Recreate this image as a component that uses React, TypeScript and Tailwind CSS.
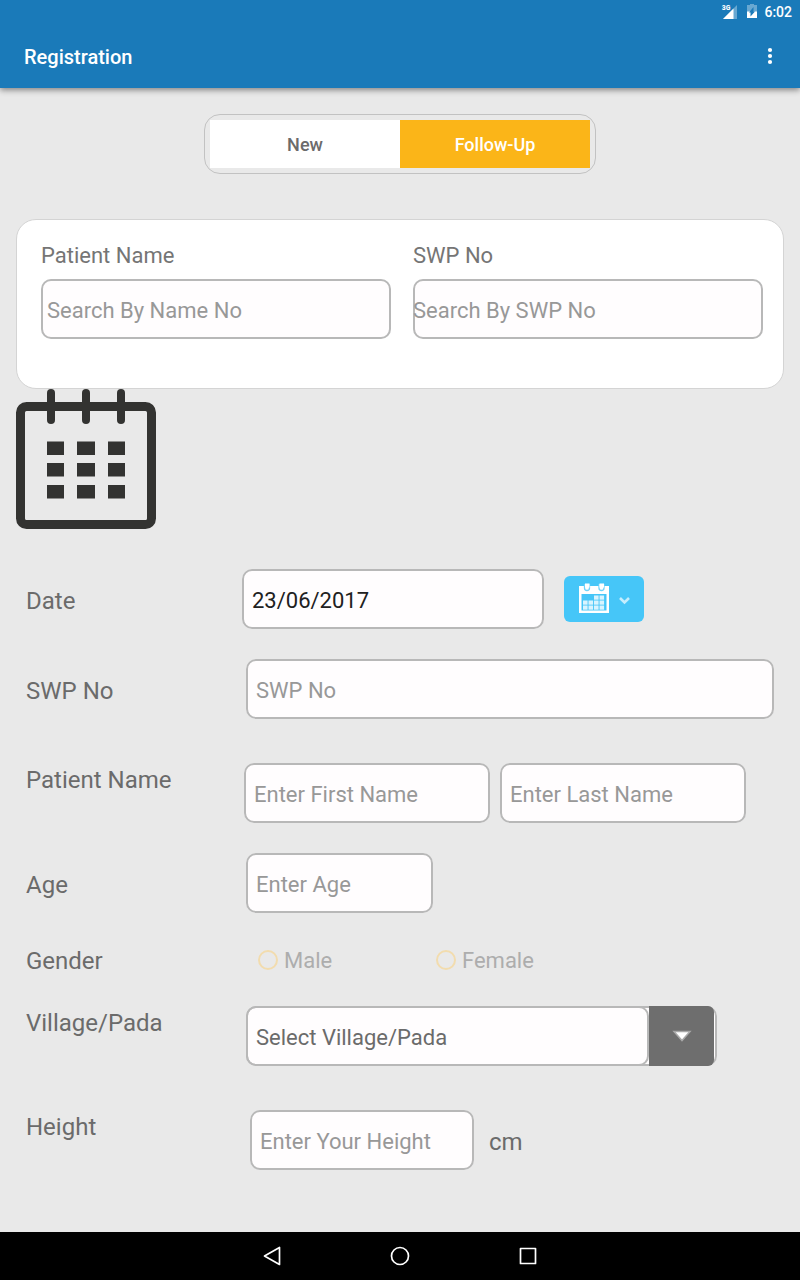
import type { InputHTMLAttributes, ReactNode } from 'react';

const BOX =
  'h-[60px] min-w-0 rounded-[10px] bg-[#fffdfe] pt-0.5 text-[22px] text-[#212121] ring-2 ring-inset ring-[#b8b8b8] outline-none placeholder:text-[#989898] placeholder:opacity-100';

function TextBox({ className = '', ...rest }: InputHTMLAttributes<HTMLInputElement> & { className?: string }) {
  return <input type="text" className={`${BOX} ${className}`} {...rest} />;
}

function Row({ label, htmlFor, className = '', children }: { label: string; htmlFor?: string; className?: string; children: ReactNode }) {
  return (
    <div className={`flex ${className}`}>
      <label htmlFor={htmlFor} className="w-[216px] shrink-0 pt-[3px] text-2xl leading-7 text-[#6b6b6b]">
        {label}
      </label>
      {children}
    </div>
  );
}

function StatusBar() {
  return (
    <div className="flex h-6 items-center justify-end pr-2 text-white">
      <span className="self-start pt-1 font-[Roboto_Condensed,Roboto,sans-serif] text-[8px] leading-2 font-bold">3G</span>
      <svg className="-ml-2 h-4 w-4" viewBox="0 0 16 16" aria-hidden="true">
        <path d="M15 1v14H1z" fill="#fff" opacity=".35" />
        <path d="M11.500 4.500V15H1z" fill="#fff" />
      </svg>
      <svg className="ml-2 h-4 w-3" viewBox="0 0 12 16" aria-hidden="true">
        <path d="M1 1h3V0h4v1h3v13H1z" fill="#fff" opacity=".35" />
        <path d="M1 7.500h10V14H1z" fill="#fff" />
        <path d="M7.500 3v4.500H9L4.500 12.500V8.500H3z" fill="#1a7ab9" />
      </svg>
      <span className="ml-1.5 text-sm leading-6 font-medium">6:02</span>
    </div>
  );
}

function LargeCalendar() {
  return (
    <svg className="ml-4 h-[140px] w-[140px]" viewBox="0 0 140 140" fill="#333331" role="img" aria-label="Calendar">
      <rect x="4.500" y="17.500" width="131" height="118" rx="6" fill="none" stroke="#333331" strokeWidth="9" />
      {[31, 66, 101].map((x) => (
        <rect key={x} x={x} y="0" width="8" height="35" rx="4" />
      ))}
      {[52.5, 74, 96].map((y) => (
        <g key={y}>
          <rect x="31" y={y} width="17" height="13.500" />
          <rect x="61" y={y} width="18" height="13.500" />
          <rect x="92" y={y} width="17" height="13.500" />
        </g>
      ))}
    </svg>
  );
}

function DateButton() {
  return (
    <button type="button" aria-label="Pick a date" className="ml-5 h-[46px] w-20 rounded-md bg-[#46c6f8]">
      <svg className="h-[46px] w-20" viewBox="0 0 80 46" aria-hidden="true">
        <path d="M15 10h30v27H15z" fill="#fff" />
        <path d="M17.500 18h25v16.500h-25z" fill="#46c6f8" />
        <path d="M20.500 8v4a2.500 2.500 0 0 0 5 0V8M35 8v4a2.500 2.500 0 0 0 5 0V8" fill="#fff" stroke="#6fd3fa" strokeWidth="1.300" />
        <path d="M21 7.500h4.500v4H21zM35.500 7.500H40v4h-4.500z" fill="#fff" />
        {[19, 24.5, 30, 35.5].map((x, i) =>
          [19.500, 24.500, 29.500].map((y, j) =>
            j === 0 && i < 2 ? null : <rect key={`${i}-${j}`} x={x} y={y} width="4.600" height="4.200" fill="#d9f4fe" />,
          ),
        )}
        <path d="M56 22l4.500 4.500L65 22" fill="none" stroke="#c5edfd" strokeWidth="2.600" />
      </svg>
    </button>
  );
}

function Gender({ label }: { label: string }) {
  return (
    <label className="flex w-[178px] items-center gap-1.5 text-[22px] leading-7 text-[#adadad]">
      <input type="radio" name="gender" disabled className="size-5 appearance-none rounded-full border-2 border-[#f2dcae]" />
      <span className="pt-0.5">{label}</span>
    </label>
  );
}

export default function App() {
  return (
    <div className="flex min-h-screen flex-col bg-[#e9e9e9] font-[Roboto,sans-serif]">
      <header className="bg-[#1a7ab9] text-white shadow-[0_2px_6px_rgba(0,0,0,0.45)]">
        <StatusBar />
        <div className="flex h-16 items-center justify-between pr-5 pl-6">
          <h1 className="pt-0.5 text-xl leading-6 font-medium">Registration</h1>
          <button type="button" aria-label="More options" className="flex h-10 w-5 items-center justify-center">
            <svg className="h-5 w-5" viewBox="0 0 20 20" fill="#fff" aria-hidden="true">
              <circle cx="10" cy="4" r="2.100" />
              <circle cx="10" cy="10" r="2.100" />
              <circle cx="10" cy="16" r="2.100" />
            </svg>
          </button>
        </div>
      </header>

      <main className="flex-1 pt-[26px] pb-8">
        <div className="mx-auto flex h-[60px] w-[392px] max-w-full rounded-2xl border border-[#c2c2c2] p-[5px] text-lg font-medium">
          <button type="button" className="flex-1 bg-white pt-0.5 text-[#6b6b6b]">New</button>
          <button type="button" className="flex-1 bg-[#fbb518] pt-0.5 text-white">Follow-Up</button>
        </div>

        <section className="mx-4 mt-[45px] grid h-[170px] grid-cols-2 gap-[22px] rounded-[20px] border border-[#d4d4d4] bg-white pt-[22px] pr-5 pl-6">
          <div className="flex flex-col gap-[9px]">
            <label htmlFor="find-name" className="text-[22px] leading-7 text-[#757575]">Patient Name</label>
            <TextBox id="find-name" placeholder="Search By Name No" className="w-full pl-1.5" />
          </div>
          <div className="flex flex-col gap-[9px]">
            <label htmlFor="find-swp" className="text-[22px] leading-7 text-[#757575]">SWP No</label>
            <TextBox id="find-swp" placeholder="Search By SWP No" className="w-full" />
          </div>
        </section>

        <LargeCalendar />

        <form className="mt-10 px-[26px]">
          <Row label="Date" htmlFor="date" className="items-center">
            <TextBox id="date" defaultValue="23/06/2017" className="w-[302px] px-2.5" />
            <DateButton />
          </Row>
          <Row label="SWP No" htmlFor="swp" className="mt-[30px] items-center">
            <TextBox id="swp" placeholder="SWP No" className="ml-1 flex-1 px-2.5" />
          </Row>
          <Row label="Patient Name" htmlFor="first" className="mt-11">
            <div className="ml-0.5 flex gap-2.5">
              <TextBox id="first" placeholder="Enter First Name" className="w-[246px] px-2.5" />
              <TextBox aria-label="Last name" placeholder="Enter Last Name" className="w-[246px] px-2.5" />
            </div>
          </Row>
          <Row label="Age" htmlFor="age" className="mt-[30px] items-center">
            <TextBox id="age" placeholder="Enter Age" className="ml-1 w-[187px] px-2.5" />
          </Row>
          <Row label="Gender" className="mt-[31px] items-center">
            <div className="ml-4 flex">
              <Gender label="Male" />
              <Gender label="Female" />
            </div>
          </Row>
          <Row label="Village/Pada" htmlFor="village" className="mt-[31px]">
            <div className="ml-1 flex h-[60px] w-[471px] rounded-[10px] bg-[#fffdfe] pr-[3px] ring-2 ring-inset ring-[#b8b8b8]">
              <select id="village" className="min-w-0 flex-1 appearance-none rounded-[10px] px-2.5 pt-0.5 text-[22px] text-[#6b6b6b] ring-2 ring-inset ring-[#b8b8b8] outline-none">
                <option>Select Village/Pada</option>
              </select>
              <button type="button" aria-label="Open village list" className="flex w-[65px] items-center justify-center rounded-r-md bg-[#6e6e6e]">
                <svg className="h-3 w-5" viewBox="0 0 20 12" aria-hidden="true">
                  <path d="M2 1.500h16l-8 9z" fill="#fff" stroke="#a8a8a8" strokeWidth="1.500" />
                </svg>
              </button>
            </div>
          </Row>
          <Row label="Height" htmlFor="height" className="mt-11">
            <div className="ml-2 flex items-center gap-[15px]">
              <TextBox id="height" placeholder="Enter Your Height" className="w-56 px-2.5" />
              <span className="pt-[3px] text-2xl leading-7 text-[#6b6b6b]">cm</span>
            </div>
          </Row>
        </form>
      </main>

      <nav className="flex h-12 items-center justify-center gap-[104px] bg-black">
        <button type="button" aria-label="Back">
          <svg className="size-6" viewBox="0 0 24 24" fill="none" stroke="#fff" strokeWidth="1.700" strokeLinejoin="round" aria-hidden="true">
            <path d="M19.500 3.500v17L4.500 12z" />
          </svg>
        </button>
        <button type="button" aria-label="Home">
          <svg className="size-6" viewBox="0 0 24 24" fill="none" stroke="#fff" strokeWidth="1.700" aria-hidden="true">
            <circle cx="12" cy="12" r="8.500" />
          </svg>
        </button>
        <button type="button" aria-label="Recent apps">
          <svg className="size-6" viewBox="0 0 24 24" fill="none" stroke="#fff" strokeWidth="1.700" strokeLinejoin="round" aria-hidden="true">
            <rect x="4.500" y="4.500" width="15" height="15" />
          </svg>
        </button>
      </nav>
    </div>
  );
}
